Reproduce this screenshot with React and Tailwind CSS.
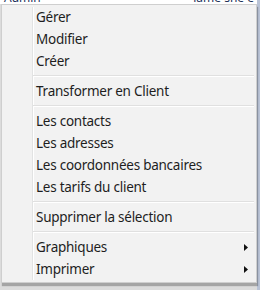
import React from "react";

const groups = [
  ["Gérer", "Modifier", "Créer"],
  ["Transformer en Client"],
  ["Les contacts", "Les adresses", "Les coordonnées bancaires", "Les tarifs du client"],
  ["Supprimer la sélection"],
  ["Graphiques>", "Imprimer>"],
];

const Item = ({ label }) => {
  const sub = label.endsWith(">");
  const text = sub ? label.slice(0, -1) : label;
  return (
    <div className="h-[22px] flex items-center pl-[34px] pr-[8px] text-[13.5px] tracking-[-0.25px] text-[#1e1e1e]">
      <span className="flex-1">{text}</span>
      {sub && (
        <svg width="4" height="7" viewBox="0 0 4 7">
          <path d="M0 0 L4 3.5 L0 7 Z" fill="#111" />
        </svg>
      )}
    </div>
  );
};

const Separator = () => (
  <div className="h-[8px] flex flex-col justify-center pl-[31px] pr-[2px]">
    <div className="h-px bg-[#e0e0e0]" />
    <div className="h-px bg-white" />
  </div>
);

export default function App() {
  return (
    <div className="relative w-[260px] h-[290px] bg-[#dcdcdc] overflow-hidden" style={{ fontFamily: '"Noto Sans", "Open Sans", sans-serif' }}>
      <div className="h-[4px] bg-white overflow-hidden flex text-[12px] leading-none text-[#20305a]">
        <span className="ml-[4px] -mt-[8px]">Admin</span>
        <span className="ml-auto mr-[6px] -mt-[8px]">iame sne e</span>
      </div>
      <div className="absolute right-0 top-0 bottom-0 w-[3px] bg-[#b9c3d6]" />
      <div className="absolute left-[1px] top-[4px] w-[256px] h-[279px] bg-[#f2f2f2] border border-[#cfcfcf] shadow-[1px_3px_1px_rgba(0,0,0,0.25)]">
        <div className="absolute left-[30px] top-[2px] bottom-[2px] w-px bg-[#e2e3e3]" />
        <div className="absolute left-[31px] top-[2px] bottom-[2px] w-px bg-white" />
        <div className="relative pt-px">
          {groups.map((g, i) => (
            <React.Fragment key={i}>
              {i > 0 && <Separator />}
              {g.map((l) => (
                <Item key={l} label={l} />
              ))}
            </React.Fragment>
          ))}
        </div>
      </div>
    </div>
  );
}
